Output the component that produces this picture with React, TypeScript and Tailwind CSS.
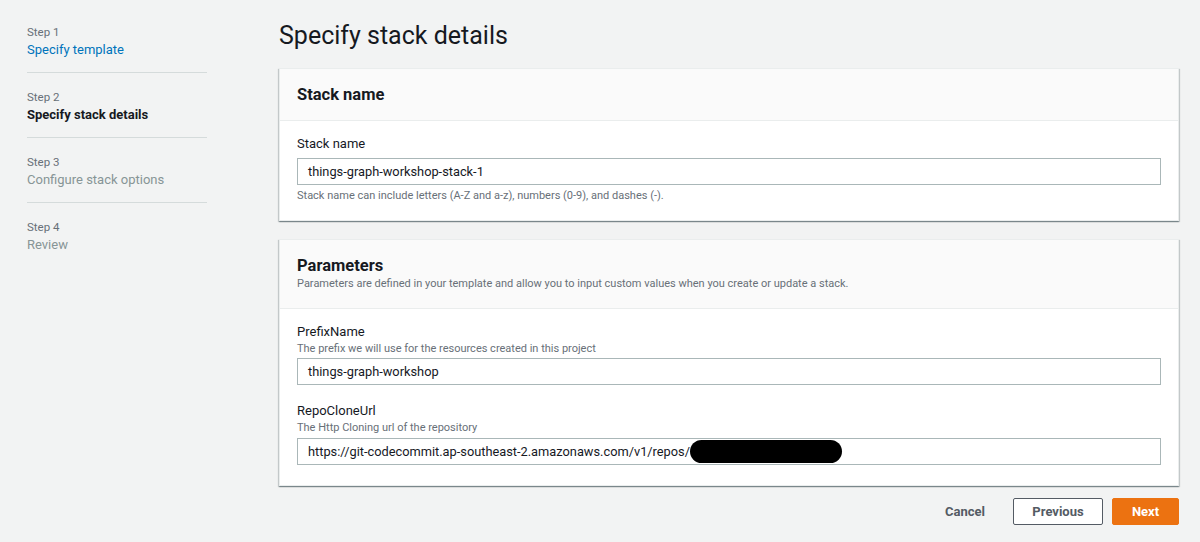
import type { ReactNode } from 'react';

const steps = [
  { label: 'Step 1', title: 'Specify template', state: 'done' },
  { label: 'Step 2', title: 'Specify stack details', state: 'active' },
  { label: 'Step 3', title: 'Configure stack options', state: 'todo' },
  { label: 'Step 4', title: 'Review', state: 'todo' },
];

function Field({
  label,
  description,
  value,
  hint,
  inputClassName = 'mt-[3px]',
  children,
}: {
  label: string;
  description?: string;
  value: string;
  hint?: string;
  inputClassName?: string;
  children?: ReactNode;
}) {
  return (
    <div className="flex flex-col">
      <label className="text-[13px] leading-[18px] text-[#16191f]">{label}</label>
      {description && (
        <span className="text-[11px] leading-[15px] text-[#687078]">{description}</span>
      )}
      <div
        className={`${inputClassName} flex h-[27px] items-center border border-[#aab7b8] bg-white pl-[10px] text-[12.8px] text-[#16191f]`}
      >
        <span>{value}</span>
        {children}
      </div>
      {hint && (
        <span className="mt-[3px] text-[11px] leading-[16px] text-[#687078]">{hint}</span>
      )}
    </div>
  );
}

function Card({
  title,
  description,
  children,
}: {
  title: string;
  description?: string;
  children: ReactNode;
}) {
  return (
    <section className="border border-[#eaeded] bg-white shadow-[0_1px_1px_0_rgba(0,28,36,0.3),1px_1px_1px_0_rgba(0,28,36,0.15),-1px_1px_1px_0_rgba(0,28,36,0.15)]">
      <div
        className={
          description
            ? 'border-b border-[#eaeded] bg-[#fafafa] px-[17px] pt-[16px] pb-[16px]'
            : 'flex h-[52px] items-center border-b border-[#eaeded] bg-[#fafafa] px-[17px]'
        }
      >
        <h2 className="text-[16.5px] leading-[20px] font-bold text-[#16191f]">{title}</h2>
        {description && (
          <p className="text-[11px] leading-[16px] text-[#687078]">{description}</p>
        )}
      </div>
      {children}
    </section>
  );
}

export default function App() {
  return (
    <div className="flex min-h-[542px] w-[1200px] bg-[#f2f3f3] font-['Roboto',sans-serif]">
      <nav className="w-[279px] shrink-0 pt-[8px] pl-[27px]">
        <ul className="w-[180px]">
          {steps.map((step, i) => (
            <li
              key={step.label}
              className={
                i < steps.length - 1
                  ? 'border-b border-[#d5dbdb] pt-[16px] pb-[12px]'
                  : 'pt-[16px] pb-[12px]'
              }
            >
              <div className="text-[11.5px] leading-[16px] text-[#687078]">{step.label}</div>
              <div
                className={
                  step.state === 'done'
                    ? 'text-[13px] leading-[20px] text-[#0073bb]'
                    : step.state === 'active'
                      ? 'text-[13px] leading-[20px] font-bold text-[#16191f]'
                      : 'text-[13px] leading-[20px] text-[#879596]'
                }
              >
                {step.title}
              </div>
            </li>
          ))}
        </ul>
      </nav>

      <main className="flex-1 pr-[21px] pt-[21px]">
        <h1 className="text-[25px] leading-[30px] text-[#16191f]">Specify stack details</h1>

        <div className="mt-[17px] flex flex-col gap-[18px]">
          <Card title="Stack name">
            <div className="px-[17px] pt-[14px] pb-[16px]">
              <Field
                label="Stack name"
                value="things-graph-workshop-stack-1"
                inputClassName="mt-[5px]"
                hint="Stack name can include letters (A-Z and a-z), numbers (0-9), and dashes (-)."
              />
            </div>
          </Card>

          <Card
            title="Parameters"
            description="Parameters are defined in your template and allow you to input custom values when you create or update a stack."
          >
            <div className="flex flex-col gap-[17px] px-[17px] pt-[14px] pb-[20px]">
              <Field
                label="PrefixName"
                description="The prefix we will use for the resources created in this project"
                value="things-graph-workshop"
                inputClassName="mt-[2px]"
              />
              <Field
                label="RepoCloneUrl"
                description="The Http Cloning url of the repository"
                value="https://git-codecommit.ap-southeast-2.amazonaws.com/v1/repos/"
              >
                <span className="h-[23px] w-[152px] rounded-full bg-black" />
              </Field>
            </div>
          </Card>
        </div>

        <div className="mt-[12px] flex items-center justify-end">
          <button className="mr-[12px] px-[16px] text-[13px] font-bold text-[#545b64]">
            Cancel
          </button>
          <button className="mr-[9px] h-[27px] w-[90px] rounded-[2px] border border-[#545b64] bg-white text-[13px] font-bold text-[#545b64]">
            Previous
          </button>
          <button className="h-[27px] w-[67px] rounded-[2px] border border-[#ec7211] bg-[#ec7211] text-[13px] font-bold text-white">
            Next
          </button>
        </div>
      </main>
    </div>
  );
}
